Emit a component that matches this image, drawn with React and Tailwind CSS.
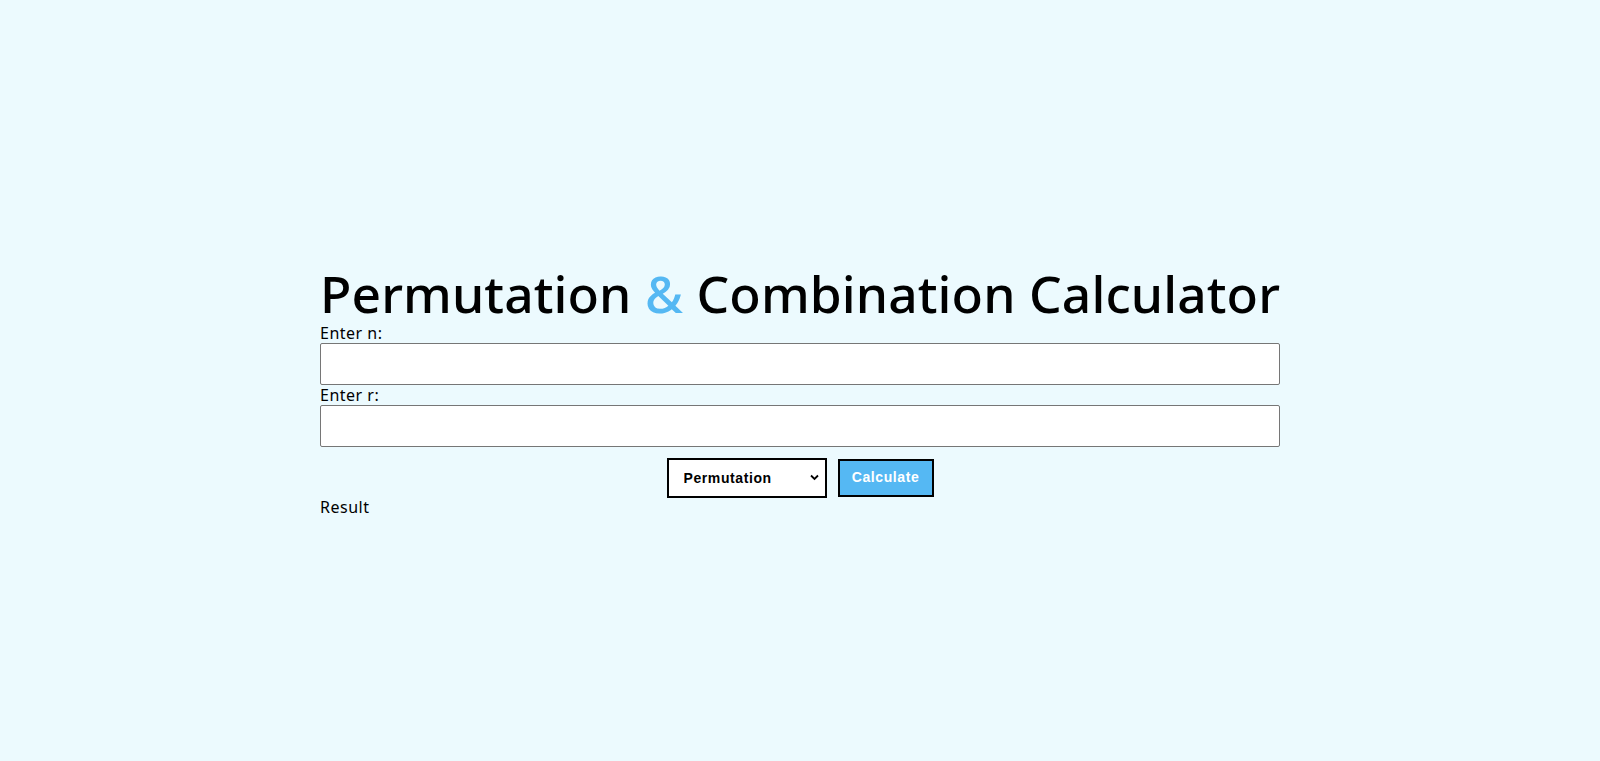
import React, { useState } from 'react';

const fact = (k) => {
  let r = 1;
  for (let i = 2; i <= k; i++) r *= i;
  return r;
};

const App = () => {
  const [n, setN] = useState('');
  const [r, setR] = useState('');
  const [mode, setMode] = useState('permutation');
  const [result, setResult] = useState('');

  const calculate = () => {
    const nn = parseInt(n, 10);
    const rr = parseInt(r, 10);
    if (isNaN(nn) || isNaN(rr) || rr > nn || nn < 0 || rr < 0) {
      setResult('Invalid input');
      return;
    }
    const value = mode === 'permutation'
      ? fact(nn) / fact(nn - rr)
      : fact(nn) / (fact(rr) * fact(nn - rr));
    setResult(String(value));
  };

  return (
    <div className="min-h-screen bg-[#ecfafe] pt-[264px] font-['Noto_Sans','Lato',sans-serif] text-black">
      <div className="w-[60%] mx-auto">
        {/* Title */}
        <h1 className="text-[51.5px] whitespace-nowrap font-medium leading-[58px] tracking-[0.1px]">
          Permutation <span className="text-[#55b8f3]">&amp;</span> Combination Calculator
        </h1>

        <label className="block text-[16px] leading-[19px] tracking-[0.5px] mt-[2px]">Enter n:</label>
        <input
          type="number"
          value={n}
          onChange={(e) => setN(e.target.value)}
          className="block w-full h-[42px] bg-white border border-[#767676] rounded-[2px] px-2"
        />
        <label className="block text-[16px] leading-[19px] tracking-[0.5px] mt-[1px]">Enter r:</label>
        <input
          type="number"
          value={r}
          onChange={(e) => setR(e.target.value)}
          className="block w-full h-[42px] bg-white border border-[#767676] rounded-[2px] px-2"
        />

        <div className="flex justify-center items-center gap-[11px] mt-[11px]">
          <div className="relative">
            <select
              value={mode}
              onChange={(e) => setMode(e.target.value)}
              className="appearance-none w-[160px] h-[40px] bg-white border-2 border-black pl-[15px] text-[14px] font-bold font-['Liberation_Sans',Arial,sans-serif] tracking-[0.6px]"
            >
              <option value="permutation">Permutation</option>
              <option value="combination">Combination</option>
            </select>
            <svg className="absolute right-[8px] top-[16px] w-[9px] h-[7px] pointer-events-none" viewBox="0 0 9 7">
              <path d="M1 1.5 L4.5 5 L8 1.5" fill="none" stroke="black" strokeWidth="1.8" />
            </svg>
          </div>
          <button
            onClick={calculate}
            className="w-[96px] h-[38px] bg-[#55b8f3] border-2 border-black text-white text-[14px] font-black font-['Liberation_Sans',Arial,sans-serif] tracking-[0.6px] pb-[2px]"
          >
            Calculate
          </button>
        </div>

        <p className="text-[16px] leading-[19px] tracking-[0.5px] mt-0">Result{result && `: ${result}`}</p>
      </div>
    </div>
  );
};

export default App;
